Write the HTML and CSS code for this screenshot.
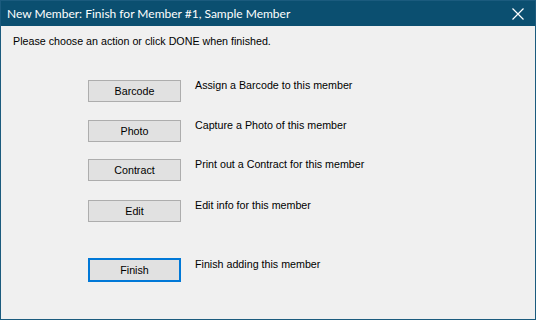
FILE: index.html
```html
<!DOCTYPE html>
<html>
<head>
<meta charset="utf-8">
<link rel="stylesheet" href="styles.css">
</head>
<body>
<div class="window">
  <div class="titlebar">
    <span class="title">New Member: Finish for Member #1, Sample Member</span>
    <svg class="close" width="12" height="12" viewBox="0 0 12 12"><path d="M0.5 0.5 L11.5 11.5 M11.5 0.5 L0.5 11.5" stroke="#ffffff" stroke-width="1.2" fill="none"/></svg>
  </div>
  <div class="content">
    <p class="intro">Please choose an action or click DONE when finished.</p>
    <div class="actions">
      <div class="row"><button class="btn">Barcode</button><span class="label">Assign a Barcode to this member</span></div>
      <div class="row r2"><button class="btn">Photo</button><span class="label">Capture a Photo of this member</span></div>
      <div class="row r3"><button class="btn">Contract</button><span class="label">Print out a Contract for this member</span></div>
      <div class="row r4"><button class="btn">Edit</button><span class="label">Edit info for this member</span></div>
      <div class="row finish"><button class="btn default">Finish</button><span class="label">Finish adding this member</span></div>
    </div>
  </div>
</div>
</body>
</html>
```

FILE: styles.css
```css
html, body {
  margin: 0;
  padding: 0;
}
body {
  width: 536px;
  height: 320px;
  font-family: "Liberation Sans", Arial, sans-serif;
  font-size: 10.7px;
  color: #000000;
}
.window {
  box-sizing: border-box;
  width: 536px;
  height: 320px;
  border: 1px solid #1b5b7e;
  background: #f0f0f0;
  display: flex;
  flex-direction: column;
}
.titlebar {
  height: 25px;
  background: #0b4f70;
  display: flex;
  align-items: center;
  justify-content: space-between;
  padding: 0 11px 0 6px;
  flex: none;
}
.title {
  color: #ffffff;
  font-family: Lato, "Noto Sans", sans-serif;
  font-size: 12px;
  line-height: 16px;
}
.close {
  display: block;
}
.content {
  padding: 9px 0 0 12px;
}
.intro {
  margin: 0;
  line-height: 13px;
  color: #000000;
}
.actions {
  display: flex;
  flex-direction: column;
  padding-left: 75px;
  margin-top: 32px;
}
.row {
  display: flex;
  align-items: flex-start;
  gap: 14px;
  height: 40px;
}
.row.r2 {
  height: 39px;
}
.row.r3 {
  height: 41px;
}
.row.r4 {
  height: 58px;
}
.btn {
  box-sizing: border-box;
  width: 93px;
  height: 22px;
  margin: 0;
  padding: 0;
  border: 1px solid #adadad;
  background: #e1e1e1;
  font-family: inherit;
  font-size: 10.7px;
  line-height: 13px;
  color: #000000;
}
.btn.default {
  border: 2px solid #0078d7;
  height: 24px;
}
.label {
  line-height: 13px;
  margin-top: -1px;
  color: #000000;
}
.finish .label {
  margin-top: 0;
}
```
